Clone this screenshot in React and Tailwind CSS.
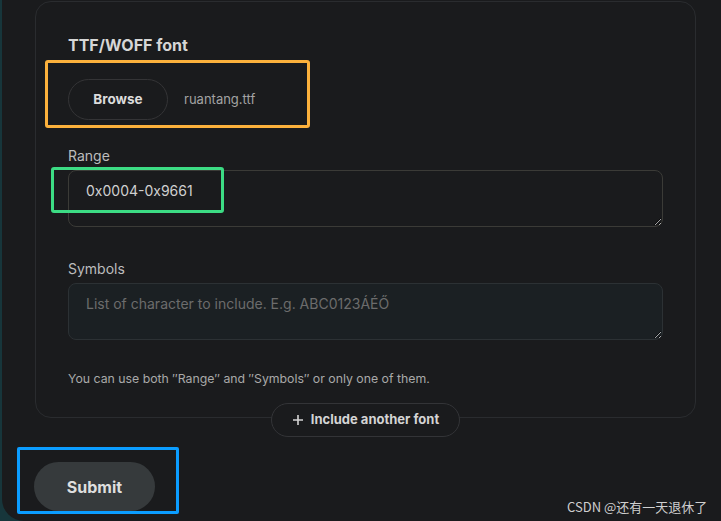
import React from "react";

export default function App() {
  return (
    <div
      className="w-[721px] h-[521px] bg-[#17363b] overflow-hidden relative"
      style={{ fontFamily: "Inter, 'Noto Sans', sans-serif" }}
    >
      <div className="ml-[2px] h-[521px] bg-[#1a1b1d] rounded-bl-[22px] pt-[1px] pl-[33px] relative">
        <div className="w-[661px] border border-[#2a2c2f] rounded-[16px] pt-[32px] pb-[30px] px-[32px]">
          <div className="text-[16px] leading-[22px] font-bold text-[#d6d6d6]">TTF/WOFF font</div>
          <div className="mt-[23px] flex items-center">
            <button className="w-[100px] h-[41px] rounded-full border border-[#343436] text-[13.5px] font-bold text-[#dcdcdc]">
              Browse
            </button>
            <span className="ml-[16px] text-[13px] text-[#a3a3a3]">ruantang.ttf</span>
          </div>
          <div className="mt-[26px] text-[14px] leading-[20px] text-[#bdbdbd]">Range</div>
          <textarea
            readOnly
            value="0x0004-0x9661"
            className="mt-[4px] block w-full h-[57px] bg-[#1a1b1d] border border-[#3b3b37] rounded-[8px] pl-[17px] pt-[10px] text-[14px] leading-[20px] text-[#d0d0d0] outline-none"
          />
          <div className="mt-[32px] text-[14px] leading-[20px] text-[#bdbdbd]">Symbols</div>
          <textarea
            readOnly
            placeholder="List of character to include. E.g. ABC0123ÁÉŐ"
            className="mt-[4px] block w-full h-[57px] bg-[#1b2023] border border-[#2c3134] rounded-[8px] pl-[17px] pt-[10px] text-[14px] leading-[20px] text-[#d0d0d0] placeholder:text-[#6c6c6c] outline-none"
          />
          <div className="mt-[31px] text-[12.3px] leading-[16px] text-[#a9a9a9]">
            You can use both ″Range″ and ″Symbols″ or only one of them.
          </div>
        </div>
        <div className="w-[661px] flex justify-center -mt-[15px]">
          <button className="h-[34px] px-[20px] rounded-full border border-[#333437] bg-[#1a1b1d] flex items-center gap-[7px] text-[13px] font-bold text-[#d4d4d4]">
            <svg width="12" height="12" viewBox="0 0 12 12" fill="none" stroke="#d4d4d4" strokeWidth="1.6">
              <path d="M6 1v10M1 6h10" />
            </svg>
            Include another font
          </button>
        </div>
        <button className="mt-[25px] -ml-[1px] w-[121px] h-[49px] rounded-full bg-[#363a3c] text-[16px] font-bold text-[#dedede]">
          Submit
        </button>

        <div className="absolute left-[43px] top-[60px] w-[265px] h-[68px] border-[3px] border-[#fcb13c] rounded-[3px]" />
        <div className="absolute left-[49px] top-[167px] w-[173px] h-[46px] border-[3px] border-[#3cdc84] rounded-[3px]" />
        <div className="absolute left-[15px] top-[447px] w-[162px] h-[67px] border-[3px] border-[#0b9dff] rounded-[2px]" />

        <div
          className="absolute left-[565px] top-[497px] text-[13px] leading-[20px] text-[#cfcfcf] whitespace-nowrap"
          style={{ fontFamily: "'Noto Sans CJK SC', 'Noto Sans', sans-serif" }}
        >
          CSDN @还有一天退休了
        </div>
      </div>
    </div>
  );
}
